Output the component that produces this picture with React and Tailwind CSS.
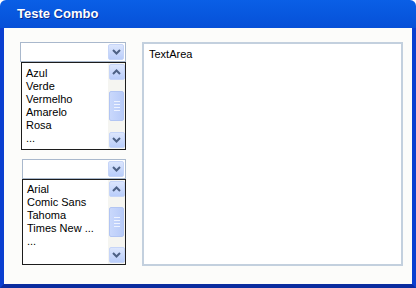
import React from "react";

const Chevron = ({ up }) => (
  <svg width="9" height="6" viewBox="0 0 9 6">
    <path d={up ? "M1 5 L4.5 1.5 L8 5" : "M1 1 L4.5 4.5 L8 1"} fill="none" stroke="#4d6185" strokeWidth="2" />
  </svg>
);

const Btn = ({ up }) => (
  <div className="w-[16px] h-[16px] rounded-[2px] bg-gradient-to-b from-[#dce6fd] to-[#b9cdfa] border border-[#c6d5f8] flex items-center justify-center">
    <Chevron up={up} />
  </div>
);

const Combo = () => (
  <div className="h-[20px] border border-[#a9b8cc] bg-white flex items-center justify-end pr-[1px]">
    <Btn />
  </div>
);

const Scroll = () => (
  <div className="w-[17px] h-full bg-[#f5f5f1] flex flex-col items-center justify-between py-[1px]">
    <Btn up />
    <div className="w-[15px] h-[30px] rounded-[2px] bg-gradient-to-r from-[#c9d8fc] to-[#b8cbf8] border border-[#b2c5f3] flex flex-col items-center justify-center gap-[2px]">
      <div className="w-[6px] h-px bg-[#eef3ff]" />
      <div className="w-[6px] h-px bg-[#eef3ff]" />
      <div className="w-[6px] h-px bg-[#eef3ff]" />
      <div className="w-[6px] h-px bg-[#eef3ff]" />
    </div>
    <Btn />
  </div>
);

const List = ({ items, h, pt }) => (
  <div className={`border border-[#1c1c1c] bg-white flex ${h}`}>
    <div className={`flex-1 pl-[4px] ${pt} text-[11px] leading-[13px] text-black`}>
      {items.map((t) => (
        <div key={t}>{t}</div>
      ))}
    </div>
    <Scroll />
  </div>
);

export default function App() {
  return (
    <div className="w-[416px] h-[288px] flex flex-col" style={{ fontFamily: '"Liberation Sans", Arial, sans-serif' }}>
      <div className="h-[28px] bg-gradient-to-b from-[#0a5fe6] to-[#0650d8] flex items-center pl-[17px] rounded-t-[6px]">
        <span className="text-white text-[13px] font-bold [text-shadow:1px_1px_0_#0a2a8e]">
          Teste Combo
        </span>
      </div>
      <div className="flex-1 border-x-[4px] border-b-[4px] border-x-[#0a3fd0] border-b-[#0a2c9f] bg-[#fcfcfa] flex pt-[14px] pl-[16px] pr-[9px] pb-[18px] gap-[16px]">
        <div className="w-[106px] flex flex-col">
          <Combo />
          <div className="pl-[1px]">
            <List items={["Azul", "Verde", "Vermelho", "Amarelo", "Rosa", "..."]} h="h-[88px]" pt="pt-[4px]" />
          </div>
          <div className="mt-[9px] pl-[2px] flex flex-col">
            <Combo />
            <List items={["Arial", "Comic Sans", "Tahoma", "Times New ...", "..."]} h="h-[86px]" pt="pt-[3px]" />
          </div>
        </div>
        <div className="flex-1 border-2 border-[#c3d0de] bg-white px-[5px] pt-[3px] text-[11px] leading-[14px] text-black">
          TextArea
        </div>
      </div>
    </div>
  );
}
